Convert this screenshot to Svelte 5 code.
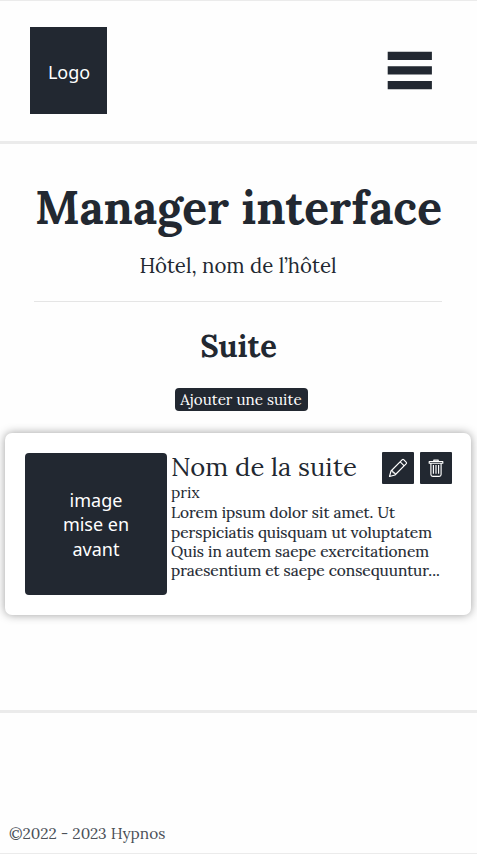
<script>
  const description = [
    'Lorem ipsum dolor sit amet. Ut',
    'perspiciatis quisquam ut voluptatem',
    'Quis in autem saepe exercitationem',
    'praesentium et saepe consequuntur...'
  ];
</script>

<div class="page">
  <header>
    <div class="logo">Logo</div>
    <button class="menu" aria-label="Menu">
      <svg width="46" height="40" viewBox="0 0 46 40" fill="#222831">
        <path d="M.7 1.7h44.2v8.2H.7zM.7 16.2h44.2v8.3H.7zM.7 31h44.2v8.2H.7z" />
      </svg>
    </button>
  </header>

  <main>
    <section class="intro">
      <h1>Manager interface</h1>
      <p>Hôtel, nom de l’hôtel</p>
    </section>

    <h2>Suite</h2>
    <button class="add">Ajouter une suite</button>

    <article>
      <div class="picture">image<br />mise en<br />avant</div>
      <div class="details">
        <div class="top">
          <h3>Nom de la suite</h3>
          <div class="actions">
            <button aria-label="Modifier">
              <svg width="20" height="20" viewBox="0 0 20 20" fill="none" stroke="#fff" stroke-width="1.15" stroke-linejoin="round">
                <path d="M1.5 18.5 3 13 14.3 1.7q.7-.6 1.4 0l2.6 2.6q.6.7 0 1.4L7 17Zm10.700-14.700 4 4M3.800 12.900l1.100.3.2 1.500 1.500.2.4 1.300" />
              </svg>
            </button>
            <button aria-label="Supprimer">
              <svg width="18" height="20" viewBox="0 0 18 20" fill="none" stroke="#fff" stroke-width="1.15" stroke-linejoin="round">
                <path d="M2.200 3.500h13.600v1.700H2.200zM6.800 3.500V2.100h4.400v1.400M3.900 5.200v11.200q0 1.900 1.900 1.900h6.400q1.900 0 1.900-1.900V5.200M6.400 7v8.800M9 7v8.800M11.600 7v8.800" />
              </svg>
            </button>
          </div>
        </div>
        <p class="price">prix</p>
        <p class="description">
          {#each description as line}
            <span>{line}</span>
          {/each}
        </p>
      </div>
    </article>
  </main>

  <footer>©2022 - 2023 Hypnos</footer>
</div>

<style>
  .page {
    box-sizing: border-box;
    width: 477px;
    height: 854px;
    display: flex;
    flex-direction: column;
    overflow: hidden;
    border-top: 1px solid #ebebeb;
    border-bottom: 1px solid #ebebeb;
    background: #fefefe;
    color: #222831;
    font-family: Lora, 'Liberation Serif', serif;
    white-space: nowrap;
  }
  h1, h2, h3, p { margin: 0; }
  button {
    border: 0;
    padding: 0;
    font: inherit;
    color: #fff;
    background: #222831;
  }
  svg { display: block; }
  header {
    box-sizing: border-box;
    height: 143px;
    flex: none;
    display: flex;
    justify-content: space-between;
    align-items: flex-start;
    padding: 26.400px 44px 0 30.300px;
    border-bottom: 3px solid #ebebeb;
  }
  .logo {
    width: 76.500px;
    height: 87px;
    background: #222831;
    color: #fff;
    font: 18px/90px 'Noto Sans', sans-serif;
    text-align: center;
    text-indent: 1px;
  }
  .menu { background: none; margin-top: 22.600px; }
  main {
    height: 566px;
    flex: none;
    display: flex;
    flex-direction: column;
    align-items: center;
  }
  .intro {
    box-sizing: border-box;
    width: 408px;
    height: 158px;
    margin-right: 1px;
    padding-top: 34px;
    border-bottom: 1px solid #e5e5e5;
    text-align: center;
  }
  h1 { font-size: 46px; line-height: 60px; text-indent: 1px; }
  .intro p { font-size: 20.450px; line-height: 30px; margin-top: 13px; }
  h2 { font-size: 30.900px; line-height: 40px; margin-top: 24px; }
  .add {
    width: 133px;
    height: 23px;
    flex: none;
    margin: 22px 0 0 5px;
    border-radius: 4px;
    font-size: 15.200px;
    line-height: 23px;
  }
  article {
    box-sizing: border-box;
    width: 466px;
    height: 182px;
    flex: none;
    display: flex;
    gap: 4px;
    margin: 22px 1px 0 0;
    padding: 20px 19px 0 20px;
    border-radius: 7px;
    background: #fff;
    box-shadow: 0 0 10px rgba(0, 0, 0, .38);
  }
  .picture {
    box-sizing: border-box;
    width: 142px;
    height: 142px;
    flex: none;
    padding-top: 35px;
    border-radius: 4px;
    background: #222831;
    color: #fff;
    font: 18px/24.300px 'Noto Sans', sans-serif;
    text-align: center;
  }
  .details { flex: 1; min-width: 0; }
  .top { display: flex; justify-content: space-between; height: 30px; }
  h3 { font-weight: 400; font-size: 25.700px; line-height: 27px; }
  .actions { display: flex; gap: 6px; margin-top: -1px; }
  .actions button {
    width: 32px;
    height: 32px;
    display: flex;
    align-items: center;
    justify-content: center;
    border-radius: 1px;
  }
  .price { font-size: 15.600px; line-height: 19px; }
  .description {
    font-size: 15.450px;
    line-height: 19.200px;
    margin-top: 1.300px;
    -webkit-text-stroke: .15px #222831;
  }
  .description span { display: block; }
  footer {
    box-sizing: border-box;
    flex: 1;
    display: flex;
    align-items: flex-end;
    padding: 0 9px 8px;
    border-top: 3px solid #ebebeb;
    color: #4b5058;
    font-size: 15.400px;
    line-height: 22px;
  }
</style>
